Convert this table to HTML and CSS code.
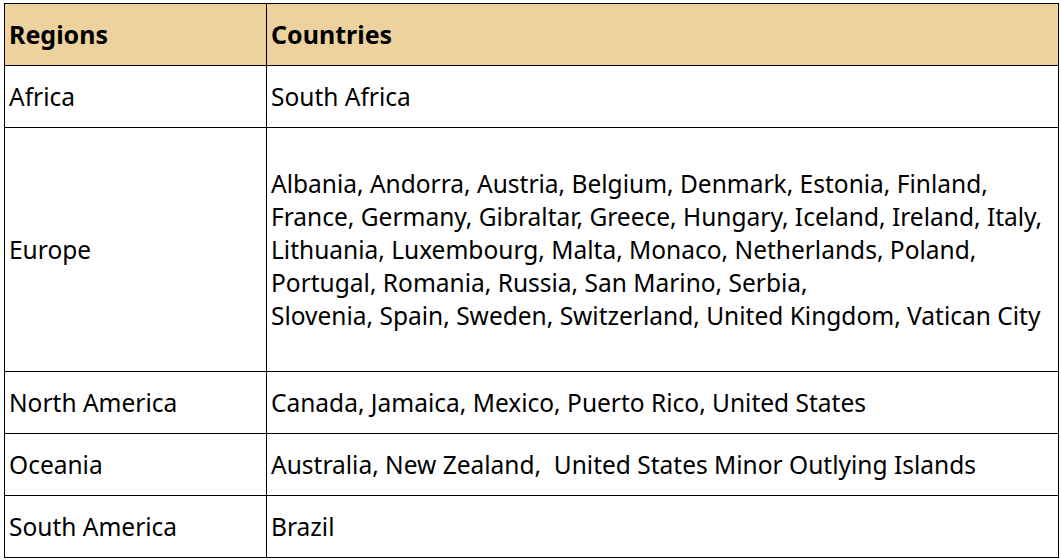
FILE: index.html
```html
<!DOCTYPE html>
<html>
<head>
<meta charset="utf-8">
<link rel="stylesheet" href="styles.css">
</head>
<body>
<table class="regions">
  <colgroup><col class="c1"><col class="c2"></colgroup>
  <thead>
    <tr class="row"><th>Regions</th><th>Countries</th></tr>
  </thead>
  <tbody>
    <tr class="row"><td>Africa</td><td>South Africa</td></tr>
    <tr class="row tall"><td>Europe</td><td>Albania, Andorra, Austria, Belgium, Denmark, Estonia, Finland,<br>France, Germany, Gibraltar, Greece, Hungary, Iceland, Ireland, Italy,<br>Lithuania, Luxembourg, Malta, Monaco, Netherlands, Poland,<br>Portugal, Romania, Russia, San Marino, Serbia,<br>Slovenia, Spain, Sweden, Switzerland, United Kingdom, Vatican City</td></tr>
    <tr class="row"><td>North America</td><td>Canada, Jamaica, Mexico, Puerto Rico, United States</td></tr>
    <tr class="row"><td>Oceania</td><td>Australia, New Zealand,&nbsp; United States Minor Outlying Islands</td></tr>
    <tr class="row"><td>South America</td><td>Brazil</td></tr>
  </tbody>
</table>
</body>
</html>
```
FILE: styles.css
```css
html, body { margin: 0; padding: 0; background: #fff; }
body { padding: 3px 0 0 4px; }
.regions {
  border-collapse: collapse;
  table-layout: fixed;
  width: 1054px;
  font-family: "Noto Sans", "Open Sans", sans-serif;
  font-size: 24.5px;
  color: #000;
}
.c1 { width: 262px; }
.c2 { width: 792px; }
.regions th, .regions td {
  border: 1px solid #000;
  padding: 0 0 0 4px;
  text-align: left;
  vertical-align: middle;
  line-height: 33px;
}
.regions th { background: #EDD29E; font-weight: bold; font-size: 25px; }
.row { height: 62px; }
.row.tall { height: 244px; }
```
